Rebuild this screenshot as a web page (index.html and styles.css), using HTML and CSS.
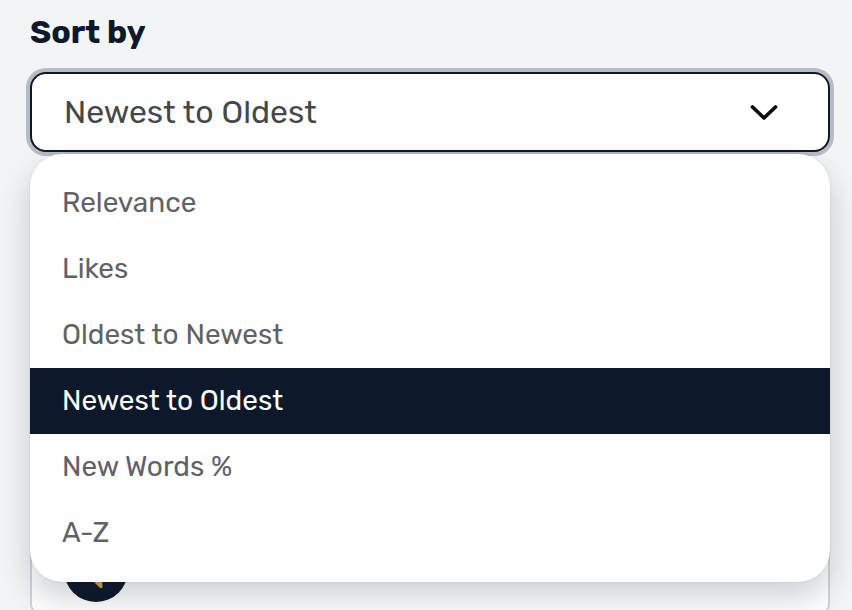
FILE: index.html
```html
<!DOCTYPE html>
<html lang="en">
<head>
    <meta charset="UTF-8">
    <title>Sort by</title>
    <link rel="stylesheet" href="styles.css">
</head>
<body>
    <div class="sort">
        <div class="sort-label" id="sort-label">Sort by</div>
        <div class="select" role="combobox" tabindex="0" aria-expanded="true" aria-labelledby="sort-label" aria-controls="sort-menu">
            <span>Newest to Oldest</span>
            <svg class="chevron" width="32" height="32" viewBox="0 0 32 32" aria-hidden="true">
                <path d="M4.500 11 L16 22 L27.500 11"/>
            </svg>
        </div>
        <ul class="menu" id="sort-menu" role="listbox">
            <li class="option" role="option">Relevance</li>
            <li class="option" role="option">Likes</li>
            <li class="option" role="option">Oldest to Newest</li>
            <li class="option active" role="option" aria-selected="true">Newest to Oldest</li>
            <li class="option" role="option">New Words %</li>
            <li class="option" role="option">A-Z</li>
        </ul>
    </div>
    <!-- first result, mostly covered by the open menu -->
    <div class="card">
        <svg class="badge" width="64" height="64" viewBox="0 0 64 64" aria-hidden="true">
            <circle cx="32" cy="32" r="32" fill="#0d192b"/>
            <path d="M26 40 L38 38 L38.500 49.500 Q37 51 35.500 49.500 Z" fill="#d4a54a"/>
        </svg>
    </div>
</body>
</html>
```

FILE: styles.css
```css
*{
    margin: 0;
    padding: 0;
    box-sizing: border-box;
}
body{
    height: 610px;
    padding: 12px 22px 0 30px;
    overflow: hidden;
    background: #f3f4f6;
    font-family: Rubik, Roboto, "Noto Sans", sans-serif;
}
.sort{
    position: relative;
    z-index: 1;
}
.sort-label{
    height: 60px;
    font-size: 32px;
    font-weight: 700;
    line-height: 40px;
    color: #0d192b;
}
.select{
    display: flex;
    align-items: center;
    justify-content: space-between;
    height: 80px;
    padding: 0 48px 0 32px;
    border: 2px solid #0d192b;
    border-radius: 16px;
    outline: none;
    background: #fff;
    box-shadow: 0 0 0 4px #b7bbc2;
    font-size: 32px;
    color: #45474b;
}
.chevron{
    fill: none;
    stroke: #0a0d14;
    stroke-width: 3.700;
    stroke-linecap: round;
    stroke-linejoin: round;
}
/* dropdown list, lies over the results below */
.menu{
    position: absolute;
    top: 142px;
    left: 0;
    width: 100%;
    padding: 16px 0;
    border-radius: 32px;
    background: #fff;
    box-shadow: 0 0 2px rgba(13, 25, 43, 0.15), 0 16px 32px rgba(13, 25, 43, 0.2);
    list-style: none;
}
.option{
    height: 66px;
    padding-left: 32px;
    font-size: 28px;
    line-height: 66px;
    color: #5f6266;
}
.active{
    background: #0d192b;
    color: #fff;
}
.card{
    height: 440px;
    margin-top: 24px;
    padding: 360px 32px 0;
    border: 2px solid #d1d3d8;
    border-radius: 12px;
    background: #fff;
}
.badge{
    display: block;
}
```
